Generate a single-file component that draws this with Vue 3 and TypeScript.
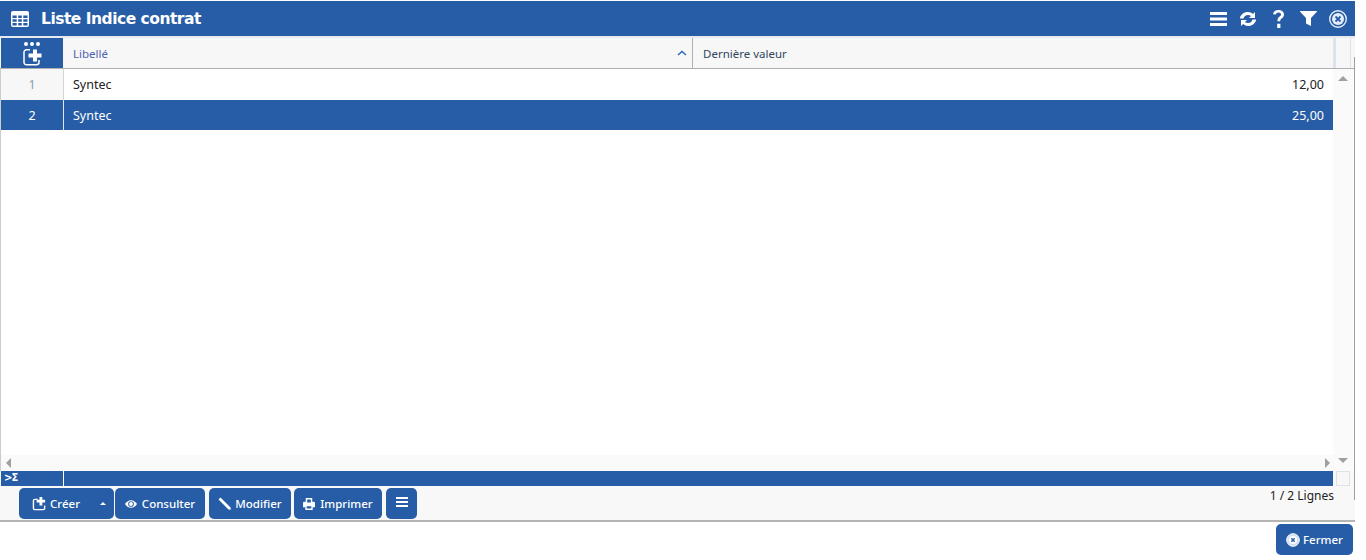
<script setup lang="ts">
const rows = [
  { n: 1, label: 'Syntec', value: '12,00', selected: false },
  { n: 2, label: 'Syntec', value: '25,00', selected: true },
]
</script>

<template>
  <div class="page">
    <header class="title">
      <svg class="ti" viewBox="0 0 18 16" width="18" height="16"><path fill="#fff" fill-rule="evenodd" d="M2 0h14a2 2 0 0 1 2 2v12a2 2 0 0 1-2 2H2a2 2 0 0 1-2-2V2a2 2 0 0 1 2-2zM1.500 4.500v2.500h4.200V4.500zm5.700 0v2.500h3.600V4.500zm5.100 0v2.500h4.200V4.500zM1.500 8.300v2.400h4.200V8.300zm5.700 0v2.400h3.600V8.300zm5.100 0v2.400h4.200V8.300zM1.500 12v2.500h4.200V12zm5.700 0v2.500h3.600V12zm5.100 0v2.500h4.200V12z"/></svg>
      <h1>Liste Indice contrat</h1>
      <div class="actions">
        <svg viewBox="0 0 17 14" width="17" height="14"><path fill="#fff" d="M0 0h17v3H0zM0 5.500h17v3H0zM0 11h17v3H0z"/></svg>
        <svg viewBox="0 0 18 16" width="18" height="16"><path fill="#fff" d="M.8 7.500C1.600 3.500 4.800 1 8.800 1c2 0 3.800.7 5 1.900L16 1v6h-6l2-2c-.8-.7-1.800-1.100-3-1.100-2.300 0-4 1.300-4.500 3.600z"/><path fill="#fff" d="M17.200 8.500c-.8 4-4 6.500-8 6.500-2 0-3.800-.7-5-1.900L2 15V9h6l-2 2c.8.7 1.800 1.100 3 1.100 2.300 0 4-1.300 4.500-3.600z"/></svg>
        <svg class="help" viewBox="0 0 11 18" width="11" height="18"><path fill="#fff" d="M0 4.200C.4 1.600 2.500 0 5.400 0 8.700 0 11 1.800 11 4.500c0 1.900-.9 2.900-2.300 3.900-1 .7-1.500 1.300-1.500 2.900H4.400c0-2.400.6-3.600 1.900-4.600 1-.8 1.700-1.300 1.700-2.300C8 3.300 7 2.500 5.500 2.500 4.100 2.500 3.100 3.200 2.800 4.600zM4.200 13.800h3.200V18H4.200z"/></svg>
        <svg viewBox="0 0 17 15" width="17" height="15"><path fill="#fff" d="M.5 0h16a.5.5 0 0 1 .4.8L11 7v8l-5-2.500V7L.1.800A.5.5 0 0 1 .5 0z"/></svg>
        <svg viewBox="0 0 18 18" width="18" height="18"><circle cx="9" cy="9" r="8.300" fill="none" stroke="#e6eef8" stroke-width="1.400"/><circle cx="9" cy="9" r="6" fill="#e4ecf6"/><path d="M6.500 6.500l5 5M11.500 6.500l-5 5" stroke="#275da6" stroke-width="1.800"/></svg>
      </div>
    </header>

    <main class="grid">
      <div class="head">
        <div class="corner">
          <span class="dots"><i></i><i></i><i></i></span>
          <svg viewBox="0 0 20 18" width="20" height="18"><path fill="none" stroke="#fff" stroke-width="1.500" d="M7 1.800H3.500A2.500 2.500 0 0 0 1 4.300v10A2.500 2.500 0 0 0 3.500 16.800h10a2.500 2.500 0 0 0 2.500-2.500V12"/><path fill="#fff" d="M10 1.500h4v4h4.500v4H14v4h-4v-4H5.500v-4H10z"/></svg>
        </div>
        <div class="th libelle">
          <span>Libellé</span>
          <svg viewBox="0 0 10 6" width="10" height="6"><path d="M1 5l4-3.500L9 5" fill="none" stroke="#2f69b8" stroke-width="1.600"/></svg>
        </div>
        <div class="th valeur"><span>Dernière valeur</span></div>
        <div class="th-end"></div>
      </div>

      <div class="body">
        <div class="rows">
          <div v-for="r in rows" :key="r.n" class="row" :class="{ selected: r.selected }">
            <div class="num">{{ r.n }}</div>
            <div class="lab">{{ r.label }}</div>
            <div class="val">{{ r.value }}</div>
          </div>
          <div class="spacer"></div>
          <div class="hscroll">
            <span class="arrow-left"></span>
            <span class="arrow-right"></span>
          </div>
        </div>
        <div class="vscroll">
          <span class="arrow-up"></span>
          <span class="arrow-down"></span>
        </div>
      </div>

      <div class="sum">
        <div class="sum-cell">
          <span>&gt;Σ</span>
        </div>
        <div class="sum-bar"></div>
        <div class="sum-end"></div>
      </div>

      <div class="toolbar">
        <div class="buttons">
          <div class="btn create">
            <svg viewBox="0 0 16 15" width="15" height="14"><path fill="none" stroke="#fff" stroke-width="1.500" d="M6 2.500H3A1.500 1.500 0 0 0 1.500 4v8A1.500 1.500 0 0 0 3 13.500h9a1.500 1.500 0 0 0 1.500-1.500V9"/><path fill="#fff" d="M8 0h3v3h3v3h-3v3H8V6H5V3h3z"/></svg>
            <span>Créer</span>
            <span class="caret"></span>
          </div>
          <div class="btn consult">
            <svg viewBox="0 0 14 9" width="12" height="8"><path fill="#fff" fill-rule="evenodd" d="M7 0c3 0 5.500 2 7 4.500C12.500 7 10 9 7 9S1.500 7 0 4.500C1.500 2 4 0 7 0zm0 1.200a3.300 3.300 0 1 0 0 6.600 3.300 3.300 0 0 0 0-6.600z"/><circle cx="7" cy="4.500" r="2.200" fill="#fff"/></svg>
            <span>Consulter</span>
          </div>
          <div class="btn modify">
            <svg viewBox="0 0 13 13" width="13" height="13"><path fill="#fff" d="M2.500 0.500 12.500 10.500 12.800 12.800 10.500 12.500 0.500 2.500z"/></svg>
            <span>Modifier</span>
          </div>
          <div class="btn print">
            <svg viewBox="0 0 13 13" width="12" height="12"><path fill="#fff" fill-rule="evenodd" d="M3 0h7v4h1.500A1.500 1.500 0 0 1 13 5.500V10h-2.500v3h-8v-3H0V5.500A1.500 1.500 0 0 1 1.500 4H3zm1.500 1.500V5h4V1.500zM4 9v2.500h5V9z"/></svg>
            <span>Imprimer</span>
          </div>
          <div class="btn menu">
            <svg viewBox="0 0 12 10" width="12" height="10"><path fill="#fff" d="M0 0h12v2H0zM0 4h12v2H0zM0 8h12v2H0z"/></svg>
          </div>
        </div>
        <div class="count">1 / 2 Lignes</div>
      </div>
    </main>

    <footer class="foot">
      <div class="btn close">
        <svg viewBox="0 0 14 14" width="14" height="14"><circle cx="7" cy="7" r="6.300" fill="#cfe0f2" stroke="#fff"/><circle cx="7" cy="7" r="4" fill="#fff"/><path d="M5.300 5.300l3.400 3.400M8.700 5.300l-3.400 3.400" stroke="#275da6" stroke-width="1.400"/></svg>
        <span>Fermer</span>
      </div>
    </footer>
  </div>
</template>

<style>
html, body { margin: 0; background: #fff; }
</style>

<style scoped>
.page {
  width: 1355px;
  height: 560px;
  display: flex;
  flex-direction: column;
  font-family: "Noto Sans", "Open Sans", sans-serif;
  font-size: 11.500px;
  color: #222;
  background: #fff;
}
.title {
  height: 35px;
  margin-top: 1px;
  flex: none;
  background: #275da6;
  display: flex;
  align-items: center;
  padding: 0 8px 0 11px;
  color: #fff;
}
.title h1 {
  margin: 0 0 0 12px;
  font: bold 15.500px "DejaVu Sans", sans-serif;
  letter-spacing: -0.500px;
}
.actions {
  margin-left: auto;
  display: flex;
  align-items: center;
  gap: 12px;
}
.help { margin: 0 4px; }
.grid {
  position: relative;
  flex: none;
  height: 486px;
  display: flex;
  flex-direction: column;
  box-sizing: border-box;
  border-bottom: 2px solid #b4b4b4;
  background: #f8f8f8;
}
.grid::after {
  content: "";
  position: absolute;
  top: 21px;
  right: 0;
  width: 1px;
  height: 443px;
  background: #a0a0a0;
}
.head {
  height: 33px;
  flex: none;
  display: flex;
  background: #f7f7f7;
  border-top: 2px solid #e6eaee;
  border-bottom: 1px solid #b0b0b0;
  box-sizing: border-box;
}
.corner {
  width: 62px;
  margin-left: 1px;
  background: #275da6;
  flex: none;
  display: flex;
  flex-direction: column;
  align-items: center;
  justify-content: center;
  gap: 2px;
  padding-top: 1px;
  box-sizing: border-box;
}
.dots { display: flex; gap: 2px; }
.dots i { width: 4px; height: 4px; border-radius: 50%; background: #fff; }
.corner svg { margin-left: 1px; }
.th {
  display: flex;
  align-items: center;
  justify-content: space-between;
  box-sizing: border-box;
  padding-left: 10px;
}
.libelle {
  width: 630px;
  color: #4f63b0;
  border-right: 1px solid #b0b0b0;
  padding-right: 5px;
  flex: none;
}
.valeur { flex: 1; color: #30475e; }
.th-end {
  width: 18px;
  margin-right: 4px;
  border-left: 3px solid #dbe4ee;
  border-right: 1px solid #dbe4ee;
  box-sizing: border-box;
  flex: none;
}
.body {
  flex: 1;
  min-height: 0;
  display: flex;
  background: #fff;
  border-left: 1px solid #ccc;
}
.rows {
  flex: 1;
  min-width: 0;
  display: flex;
  flex-direction: column;
}
.row {
  height: 31px;
  flex: none;
  display: flex;
  align-items: center;
  font-size: 12.500px;
  color: #222;
}
.row.selected {
  height: 30px;
  background: #275da6;
  color: #fff;
}
.num {
  width: 63px;
  height: 100%;
  flex: none;
  display: flex;
  align-items: center;
  justify-content: center;
  background: #f7f7f7;
  border-right: 1px solid #d4d4d4;
  box-sizing: border-box;
  color: #8f9bb0;
}
.selected .num { background: #275da6; color: #fff; border-right-color: #dfe6f0; }
.lab { padding-left: 9px; flex: 1; }
.val { padding-right: 9px; }
.spacer { flex: 1; }
.hscroll {
  height: 16px;
  flex: none;
  background: #fafafa;
  display: flex;
  align-items: center;
  justify-content: space-between;
  padding: 0 3px 0 5px;
}
.arrow-left { border: 5px solid transparent; border-left: 0; border-right: 5px solid #a0a0a0; }
.arrow-right { border: 5px solid transparent; border-right: 0; border-left: 5px solid #a0a0a0; }
.vscroll {
  width: 20px;
  margin-right: 2px;
  flex: none;
  background: #fafafa;
  display: flex;
  flex-direction: column;
  justify-content: space-between;
  align-items: center;
  padding: 7px 0 8px;
  box-sizing: border-box;
}
.arrow-up { border: 5px solid transparent; border-top: 0; border-bottom: 5px solid #a0a0a0; }
.arrow-down { border: 5px solid transparent; border-bottom: 0; border-top: 5px solid #a0a0a0; }
.sum {
  height: 15px;
  flex: none;
  display: flex;
  margin-left: 1px;
}
.sum-cell {
  width: 63px;
  flex: none;
  background: #275da6;
  border-right: 1px solid #fff;
  color: #fff;
  font: bold 10px/14px "DejaVu Sans", sans-serif;
  letter-spacing: -1px;
  padding-left: 3px;
  box-sizing: border-box;
}
.sum-bar { flex: 1; background: #275da6; }
.sum-end {
  width: 14px;
  margin: 0 5px 0 3px;
  background: #f7f7f7;
  border: 1px solid #dde2e8;
  box-sizing: border-box;
  flex: none;
}
.toolbar {
  height: 34px;
  flex: none;
  display: flex;
  justify-content: space-between;
  box-sizing: border-box;
  padding: 1px 21px 0 19px;
  background: #f8f8f8;
}
.buttons { display: flex; gap: 1px; align-self: flex-start; margin-top: 1px; }
.btn {
  height: 31px;
  background: #275da6;
  border-radius: 5px;
  color: #fff;
  display: flex;
  align-items: center;
  justify-content: center;
  gap: 5px;
  padding: 0;
  box-sizing: border-box;
  font-size: 11.500px;
  font-weight: 500;
  flex: none;
}
.create { width: 95px; justify-content: flex-start; padding: 0 8px 0 13px; gap: 3px; }
.consult { width: 90px; }
.modify { width: 82px; margin-left: 3px; gap: 4px; }
.print { width: 88px; margin-left: 2px; }
.caret {
  margin-left: auto;
  border: 3px solid transparent;
  border-top: 0;
  border-bottom: 3px solid #fff;
}
.menu { width: 31px; margin-left: 3px; padding-bottom: 3px; }
.count {
  font-size: 12px;
  color: #222;
}
.foot {
  flex: none;
  display: flex;
  justify-content: flex-end;
  padding: 2px 2px 0 0;
}
.close { width: 77px; height: 31px; gap: 3px; }
</style>
